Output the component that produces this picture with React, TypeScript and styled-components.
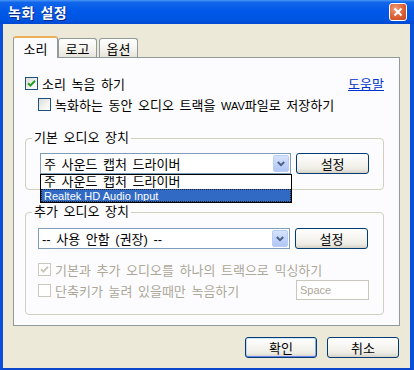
import React from 'react';
import styled, { createGlobalStyle } from 'styled-components';

const GlobalStyle = createGlobalStyle`
  html, body {
    margin: 0;
    padding: 0;
    background: #ffffff;
  }
  body {
    font-family: "Liberation Sans", "Noto Sans CJK KR", sans-serif;
    font-size: 13px;
    word-spacing: 2px;
    color: #000;
  }
  * {
    box-sizing: border-box;
  }
`;

const Window = styled.div`
  width: 414px;
  height: 370px;
  display: flex;
  flex-direction: column;
  overflow: hidden;
`;

const TitleBar = styled.div`
  height: 24px;
  flex: none;
  display: flex;
  align-items: center;
  justify-content: space-between;
  padding: 0 7px 0 8px;
  background: linear-gradient(
    to bottom,
    #4a95f7 0%,
    #1166ea 10%,
    #0058e8 45%,
    #0055e3 80%,
    #0049d2 100%
  );
`;

const Title = styled.span`
  color: #fff;
  font-family: "Noto Sans CJK KR", sans-serif;
  font-weight: 700;
  font-size: 14px;
  letter-spacing: 0.5px;
  text-shadow: 1px 1px 0 #0a2a8a;
`;

const CloseButton = styled.span`
  width: 18px;
  height: 18px;
  border: 1px solid #fff;
  border-radius: 3px;
  background: radial-gradient(circle at 35% 30%, #f0a084 0%, #e0683e 45%, #c6431c 100%);
  display: flex;
  align-items: center;
  justify-content: center;
`;

const Frame = styled.div`
  flex: 1;
  display: flex;
  flex-direction: column;
  background: #ece9d8;
  border-left: 3px solid #0a4fdc;
  border-right: 4px solid #0a4fdc;
  border-bottom: 4px solid #0a47cc;
  padding: 12px 10px 10px 10px;
`;

const TabStrip = styled.div`
  height: 21px;
  flex: none;
  display: flex;
  align-items: flex-end;
  position: relative;
  z-index: 1;
`;

const Tab = styled.div<{ $active?: boolean; $width: number }>`
  width: ${(p) => p.$width}px;
  height: ${(p) => (p.$active ? 22 : 19)}px;
  margin-bottom: ${(p) => (p.$active ? -1 : 0)}px;
  margin-right: ${(p) => (p.$active ? 0 : 2)}px;
  border: 1px solid #919b9c;
  border-bottom: none;
  border-top: ${(p) => (p.$active ? '2px solid #eab15a' : '1px solid #919b9c')};
  border-radius: 3px 3px 0 0;
  background: ${(p) =>
    p.$active ? '#fcfcfe' : 'linear-gradient(to bottom, #ffffff, #f3f2ec 60%, #e6e4da)'};
  display: flex;
  align-items: center;
  justify-content: center;
  padding-top: ${(p) => (p.$active ? 0 : 1)}px;
`;

const Panel = styled.div`
  flex: 1;
  border: 1px solid #919b9c;
  background: #fcfcfe;
  display: flex;
  flex-direction: column;
  padding: 18px 15px 10px 11px;
`;

const Row = styled.div<{ $indent?: number; $gap?: number; $height?: number }>`
  display: flex;
  align-items: center;
  height: ${(p) => p.$height ?? 14}px;
  padding-left: ${(p) => p.$indent ?? 0}px;
  margin-top: ${(p) => p.$gap ?? 0}px;
`;

const CheckLabel = styled.label<{ $disabled?: boolean }>`
  display: flex;
  align-items: center;
  gap: 4px;
  color: ${(p) => (p.$disabled ? '#aca899' : '#000')};
  white-space: pre;
`;

const Latin = styled.span`
  font-size: 11px;
  word-spacing: 0;
`;

const Box = styled.span<{ $disabled?: boolean }>`
  width: 13px;
  height: 13px;
  flex: none;
  border: 1px solid ${(p) => (p.$disabled ? '#cac8bb' : '#1c5180')};
  background: ${(p) =>
    p.$disabled ? '#ffffff' : 'linear-gradient(135deg, #dcdcd7 0%, #f4f4f0 60%, #ffffff 100%)'};
  display: flex;
  align-items: center;
  justify-content: center;
`;

const HelpLink = styled.a`
  margin-left: auto;
  color: #0033cc;
  text-decoration: underline;
  cursor: pointer;
`;

const Group = styled.fieldset<{ $gap: number }>`
  margin: ${(p) => p.$gap}px 0 0 0;
  padding: 0;
  border: 1px solid #d0d0bf;
  border-radius: 4px;
  min-width: 0;
`;

const Legend = styled.legend`
  margin-left: 6px;
  padding: 0 2px;
  height: 14px;
  line-height: 14px;
  color: #000;
`;

const GroupBody = styled.div<{ $pad: string }>`
  padding: ${(p) => p.$pad};
  display: flex;
  flex-direction: column;
`;

const ComboRow = styled.div`
  display: flex;
  align-items: center;
  gap: 5px;
`;

const Combo = styled.div`
  position: relative;
  width: 252px;
  height: 21px;
  border: 1px solid #7f9db9;
  background: #fff;
  display: flex;
  align-items: center;
  padding-left: 3px;
  white-space: pre;
`;

const DropButton = styled.span`
  margin-left: auto;
  margin-right: 1px;
  width: 16px;
  height: 17px;
  border: 1px solid #b9cdf7;
  border-radius: 2px;
  background: linear-gradient(to bottom, #d6e3fd 0%, #c2d4fa 50%, #b1c6f4 100%);
  display: flex;
  align-items: center;
  justify-content: center;
`;

const DropList = styled.div`
  position: absolute;
  left: -1px;
  top: 20px;
  width: 252px;
  height: 29px;
  border: 1px solid #000;
  background: #fff;
  z-index: 5;
  display: flex;
  flex-direction: column;
  overflow: hidden;
`;

const DropItem = styled.div<{ $selected?: boolean }>`
  height: ${(p) => (p.$selected ? 13 : 14)}px;
  flex: none;
  line-height: 12px;
  display: flex;
  align-items: center;
  padding-left: 2px;
  white-space: pre;
  overflow: hidden;
  background: ${(p) => (p.$selected ? '#316ac5' : '#fff')};
  color: ${(p) => (p.$selected ? '#fff' : '#000')};
  border: 1px dotted ${(p) => (p.$selected ? '#222' : 'transparent')};
  font-size: ${(p) => (p.$selected ? '11px' : '13px')};
  word-spacing: ${(p) => (p.$selected ? '0' : '2px')};
`;

const Button = styled.button<{ $width: number; $default?: boolean }>`
  width: ${(p) => p.$width}px;
  height: 21px;
  padding: 0;
  border: 1px solid #003c74;
  border-radius: 3px;
  background: linear-gradient(to bottom, #ffffff 0%, #f5f4ef 50%, #ecebe4 80%, #d6d0c5 100%);
  box-shadow: ${(p) =>
    p.$default
      ? 'inset 0 1px 0 #cee7ff, inset 0 -1px 0 #6982ee, inset 1px 0 0 #bcd4f6, inset -1px 0 0 #89ade4'
      : 'none'};
  font-family: "Noto Sans CJK KR", sans-serif;
  font-size: 13px;
  color: #000;
`;

const SpaceField = styled.div`
  margin-left: auto;
  width: 73px;
  height: 20px;
  border: 1px solid #c9c7ba;
  background: #fff;
  color: #aca899;
  font-size: 11px;
  display: flex;
  align-items: center;
  padding-left: 3px;
`;

const Footer = styled.div`
  display: flex;
  justify-content: flex-end;
  gap: 10px;
  margin-top: 11px;
  padding-right: 1px;
`;

function Check({ checked, disabled }: { checked?: boolean; disabled?: boolean }) {
  return (
    <Box $disabled={disabled}>
      {checked && (
        <svg width="9" height="9" viewBox="0 0 9 9">
          <path
            d="M1 4.2 L3.4 6.6 L8 1.8"
            fill="none"
            stroke={disabled ? '#cac8bb' : '#21a121'}
            strokeWidth="2"
          />
        </svg>
      )}
    </Box>
  );
}

function Chevron() {
  return (
    <svg width="8" height="6" viewBox="0 0 8 6">
      <path d="M0.8 1 L4 4.2 L7.2 1" fill="none" stroke="#4d6185" strokeWidth="2" />
    </svg>
  );
}

export default function App() {
  return (
    <>
      <GlobalStyle />
      <Window>
        <TitleBar>
          <Title>녹화 설정</Title>
          <CloseButton>
            <svg width="10" height="10" viewBox="0 0 10 10">
              <path d="M1.5 1.5 L8.5 8.5 M8.5 1.5 L1.5 8.5" stroke="#fff" strokeWidth="2" />
            </svg>
          </CloseButton>
        </TitleBar>
        <Frame>
          <TabStrip>
            <Tab $active $width={45}>소리</Tab>
            <Tab $width={39}>로고</Tab>
            <Tab $width={39}>옵션</Tab>
          </TabStrip>
          <Panel>
            <Row>
              <CheckLabel>
                <Check checked />
                소리 녹음 하기
              </CheckLabel>
              <HelpLink>도움말</HelpLink>
            </Row>
            <Row $indent={13} $gap={7}>
              <CheckLabel>
                <Check />
                <span>
                  녹화하는 동안 오디오 트랙을 <Latin>WAV</Latin>파일로 저장하기
                </span>
              </CheckLabel>
            </Row>

            <Group $gap={20}>
              <Legend>기본 오디오 장치</Legend>
              <GroupBody $pad="8px 14px 15px 14px">
                <ComboRow>
                  <Combo>
                    주 사운드 캡처 드라이버
                    <DropButton>
                      <Chevron />
                    </DropButton>
                    <DropList>
                      <DropItem>주 사운드 캡처 드라이버</DropItem>
                      <DropItem $selected>Realtek HD Audio Input</DropItem>
                    </DropList>
                  </Combo>
                  <Button $width={73}>설정</Button>
                </ComboRow>
              </GroupBody>
            </Group>

            <Group $gap={15}>
              <Legend>추가 오디오 장치</Legend>
              <GroupBody $pad="9px 14px 14px 12px">
                <ComboRow>
                  <Combo>
                    -- 사용 안함 (권장) --
                    <DropButton>
                      <Chevron />
                    </DropButton>
                  </Combo>
                  <Button $width={73}>설정</Button>
                </ComboRow>
                <Row $gap={13}>
                  <CheckLabel $disabled>
                    <Check checked disabled />
                    기본과 추가 오디오를 하나의 트랙으로 믹싱하기
                  </CheckLabel>
                </Row>
                <Row $gap={4} $height={20}>
                  <CheckLabel $disabled>
                    <Check disabled />
                    단축키가 눌려 있을때만 녹음하기
                  </CheckLabel>
                  <SpaceField>Space</SpaceField>
                </Row>
              </GroupBody>
            </Group>
          </Panel>
          <Footer>
            <Button $width={72} $default>
              확인
            </Button>
            <Button $width={72}>취소</Button>
          </Footer>
        </Frame>
      </Window>
    </>
  );
}
